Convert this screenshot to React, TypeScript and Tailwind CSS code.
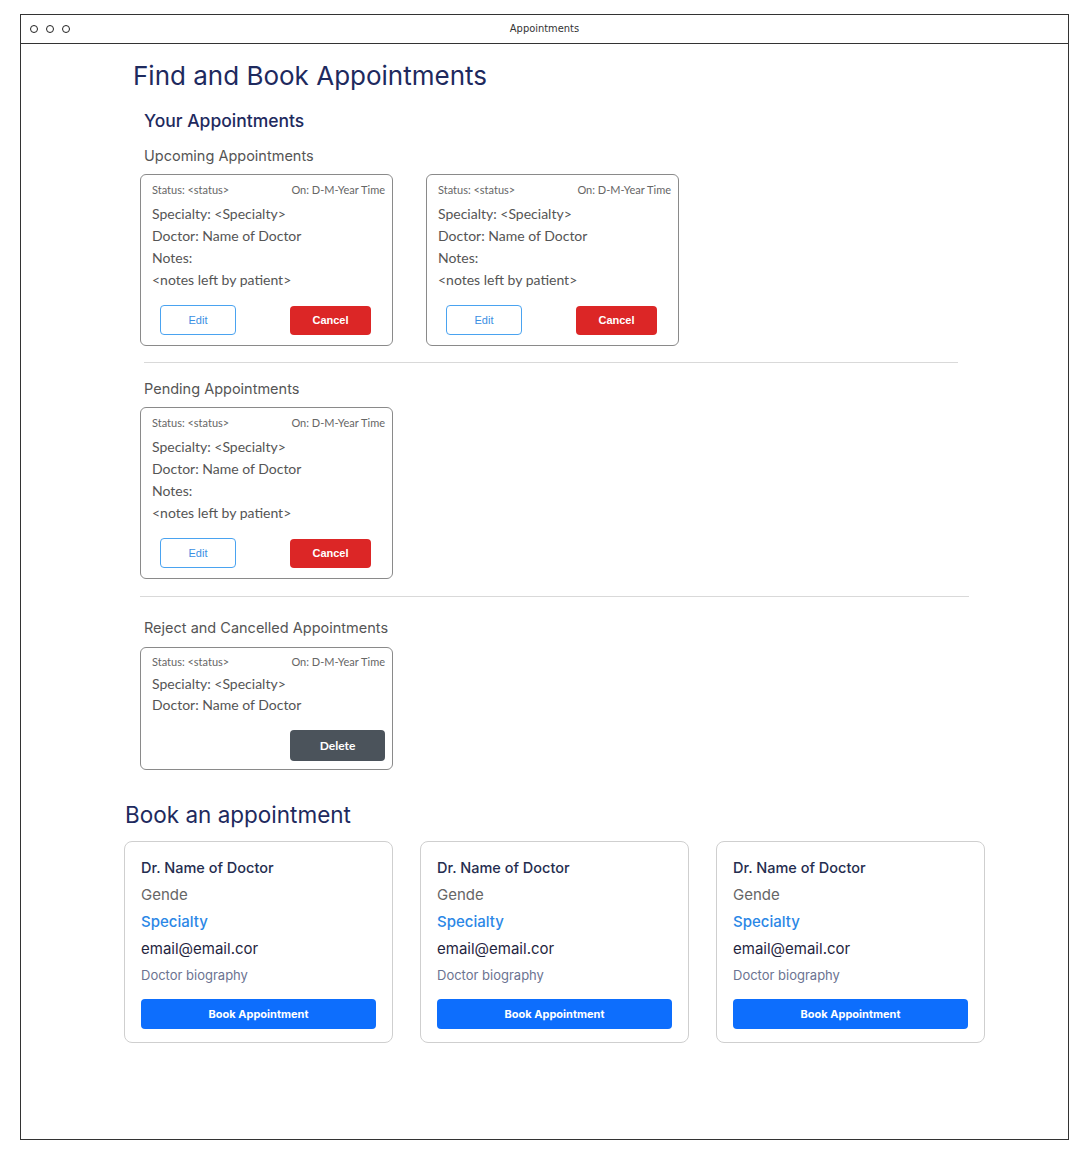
import React from "react";

const quick = { fontFamily: "Lato, 'Open Sans', sans-serif" };
const inter = { fontFamily: "Inter, 'Noto Sans', sans-serif" };

function AppointmentCard({ notes = true, kind = "active" }: { notes?: boolean; kind?: "active" | "closed" }) {
  return (
    <div className="w-[253px] rounded-[6px] border border-[#8a8a8a] bg-white" style={quick}>
      <div className={`flex justify-between pl-[11px] pr-[7px] text-[11px] leading-[14px] text-[#666] ${kind === "closed" ? "pt-[7px]" : "pt-[8px]"}`}>
        <span>Status: &lt;status&gt;</span>
        <span>On: D-M-Year Time</span>
      </div>
      <div className={`pl-[11px] text-[14px] text-[#555] ${kind === "closed" ? "mt-[4px] leading-[21px]" : "mt-[6px] leading-[22px]"}`}>
        <div>Specialty: &lt;Specialty&gt;</div>
        <div>Doctor: Name of Doctor</div>
        {notes && (
          <>
            <div>Notes:</div>
            <div>&lt;notes left by patient&gt;</div>
          </>
        )}
      </div>
      {kind === "active" ? (
        <div className="mt-[14px] mb-[10px] flex items-center justify-between pl-[19px] pr-[21px]">
          <button
            className="h-[30px] w-[76px] rounded-[4px] border border-[#4aa3f0] bg-white text-[11px] text-[#3b8fe3]"
            style={{ fontFamily: "'Liberation Sans', Arial, sans-serif" }}
          >
            Edit
          </button>
          <button
            className="h-[29px] w-[81px] rounded-[4px] bg-[#dc2626] text-[11px] font-bold text-white"
            style={{ fontFamily: "'Liberation Sans', Arial, sans-serif" }}
          >
            Cancel
          </button>
        </div>
      ) : (
        <div className="mt-[15px] mb-[8px] flex justify-end pr-[7px]">
          <button className="h-[31px] w-[95px] rounded-[4px] bg-[#4b535b] text-[12px] font-bold text-white">
            Delete
          </button>
        </div>
      )}
    </div>
  );
}

function DoctorCard() {
  return (
    <div className="w-[269px] rounded-[8px] border border-[#cfcfcf] bg-white px-4 pt-[12px] pb-[13px]" style={inter}>
      <div className="text-[14.5px] font-medium leading-[27px] text-[#252d4f]">Dr. Name of Doctor</div>
      <div className="text-[15px] leading-[27px] text-[#666]">Gende</div>
      <div className="text-[15px] font-medium leading-[27px] text-[#2b87e6]">Specialty</div>
      <div className="text-[15px] leading-[27px] text-[#1f2540]">email@email.cor</div>
      <div className="text-[13px] leading-[27px] text-[#6b7391]">Doctor biography</div>
      <button className="mt-[10px] h-[30px] w-full rounded-[4px] bg-[#0d6efd] text-[11px] font-bold text-white">
        Book Appointment
      </button>
    </div>
  );
}

export default function App() {
  return (
    <div className="h-[1154px] w-[1090px] bg-white pt-[14px] pl-[20px]">
      <div className="h-[1126px] w-[1049px] border border-[#333] bg-white">
        <div className="relative flex h-[29px] items-center border-b border-[#333]">
          <div className="flex gap-[8px] pl-[9px]">
            <span className="h-[8px] w-[8px] rounded-full border border-[#222]" />
            <span className="h-[8px] w-[8px] rounded-full border border-[#222]" />
            <span className="h-[8px] w-[8px] rounded-full border border-[#222]" />
          </div>
          <div
            className="absolute left-0 right-0 text-center text-[11px] text-[#333]"
            style={{ fontFamily: "'DejaVu Sans Condensed', 'DejaVu Sans', sans-serif" }}
          >
            Appointments
          </div>
        </div>

        <div className="pl-[103px] pt-[16px]">
          <h1 className="ml-[9px] text-[26px] leading-[32px] text-[#1e2a5e]" style={inter}>
            Find and Book Appointments
          </h1>

          <div className="ml-[16px]">
            <h2 className="ml-[4px] mt-[17px] text-[17.5px] font-medium leading-[24px] text-[#1e2a5e]" style={inter}>
              Your Appointments
            </h2>

            <h3 className="ml-[4px] mt-[13px] text-[14.5px] font-normal leading-[20px] text-[#555]" style={inter}>
              Upcoming Appointments
            </h3>
            <div className="mt-[8px] flex gap-[33px]">
              <AppointmentCard />
              <AppointmentCard />
            </div>

            <div className="ml-[4px] mt-[16px] h-px w-[814px] bg-[#d9d9d9]" />

            <h3 className="ml-[4px] mt-[16px] text-[14.5px] font-normal leading-[20px] text-[#555]" style={inter}>
              Pending Appointments
            </h3>
            <div className="mt-[8px] flex">
              <AppointmentCard />
            </div>

            <div className="mt-[17px] h-px w-[829px] bg-[#d9d9d9]" />

            <h3 className="ml-[4px] mt-[21px] text-[14.5px] font-normal leading-[20px] text-[#555]" style={inter}>
              Reject and Cancelled Appointments
            </h3>
            <div className="mt-[9px] flex">
              <AppointmentCard notes={false} kind="closed" />
            </div>
          </div>

          <h2 className="ml-[1px] mt-[30px] text-[22.5px] leading-[30px] text-[#1e2a5e]" style={inter}>
            Book an appointment
          </h2>
          <div className="mt-[11px] flex gap-[27px]">
            <DoctorCard />
            <DoctorCard />
            <DoctorCard />
          </div>
        </div>
      </div>
    </div>
  );
}
